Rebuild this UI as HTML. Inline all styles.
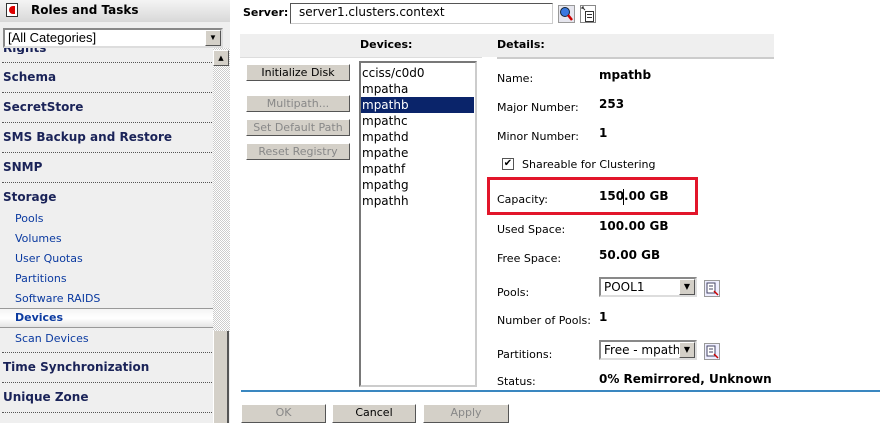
<!DOCTYPE html>
<html><head><style>
*{margin:0;padding:0;box-sizing:border-box}
body{width:880px;height:423px;overflow:hidden;background:#fff;font-family:"DejaVu Sans","Liberation Sans",sans-serif;font-size:12px;position:relative;color:#000}
.a{position:absolute;white-space:nowrap}
.lp{position:absolute;left:0;top:0;width:230px;height:423px;background:#efefef}
.hd{position:absolute;left:0;top:0;width:230px;height:22px;background:linear-gradient(#f4f4f4,#d8d8d8)}
.b{font-weight:bold;color:#1a2358;font-size:12px}
.s{color:#0b3aa0;font-size:11px}
.dot{position:absolute;left:2px;width:210px;border-top:1px dotted #555}
.btn{position:absolute;height:17px;background:#d4d0c8;border:1px solid;border-color:#fff #555 #555 #fff;font-size:11px;text-align:center;line-height:15px}
.dis{color:#888}
.lbl{position:absolute;left:497px;font-size:11px}
.val{position:absolute;left:599px;font-weight:bold;font-size:12px}
.li{position:absolute;left:362px;font-size:12px;line-height:16px}
.sel{position:absolute;height:20px;border:2px inset #ddd;background:#fff;font-size:12px;padding-left:3px;line-height:16px}
.arr{position:absolute;right:0;top:0;width:16px;height:16px;background:#d4d0c8;border:1px solid;border-color:#fff #555 #555 #fff;font-size:8px;text-align:center;line-height:14px}
</style></head><body>
<div class="lp"></div>
<div class="hd"></div>
<div class="a" style="left:6px;top:3px;width:12px;height:14px;border:1px solid #333;background:#fff"><div style="position:absolute;left:2px;top:2px;width:6px;height:8px;background:#d00;border-radius:4px 0 0 4px"></div></div>
<div class="a b" style="left:31px;top:3px;color:#000">Roles and Tasks</div>
<div class="sel" style="left:3px;top:28px;width:220px;font-family:'Liberation Sans',sans-serif;font-size:13px">[All Categories]<div class="arr">▼</div></div>
<div class="a" style="left:213px;top:48px;width:17px;height:285px;background:repeating-conic-gradient(#ccc 0 25%,#fff 0 50%) 0 0/2px 2px"></div>
<div class="a" style="left:213px;top:50px;width:16px;height:16px;background:#d4d0c8;border:1px solid;border-color:#fff #555 #555 #fff;font-size:7px;text-align:center;line-height:14px">▲</div>
<div class="a" style="left:213px;top:331px;width:16px;height:92px;background:#d4d0c8;border-left:1px solid #fff;border-right:2px solid #555"></div>
<div class="a b" style="left:3px;top:48px;height:6px;overflow:hidden;line-height:0">Rights</div>
<div class="dot" style="top:62px"></div>
<div class="a b" style="left:3px;top:70px">Schema</div>
<div class="dot" style="top:92px"></div>
<div class="a b" style="left:3px;top:100px">SecretStore</div>
<div class="dot" style="top:122px"></div>
<div class="a b" style="left:3px;top:130px">SMS Backup and Restore</div>
<div class="dot" style="top:152px"></div>
<div class="a b" style="left:3px;top:160px">SNMP</div>
<div class="dot" style="top:182px"></div>
<div class="a b" style="left:3px;top:190px">Storage</div>
<div class="a s" style="left:15px;top:212px">Pools</div>
<div class="a s" style="left:15px;top:232px">Volumes</div>
<div class="a s" style="left:15px;top:252px">User Quotas</div>
<div class="a s" style="left:15px;top:272px">Partitions</div>
<div class="a s" style="left:15px;top:292px">Software RAIDS</div>
<div class="a" style="left:0;top:308px;width:213px;height:20px;border-top:1px solid #999;border-bottom:1px solid #999;background:linear-gradient(#f4f4f4,#fff 50%,#e4e4e4)"></div>
<div class="a b" style="left:15px;top:311px;color:#0b3aa0;font-size:11px">Devices</div>
<div class="a s" style="left:15px;top:332px">Scan Devices</div>
<div class="dot" style="top:352px"></div>
<div class="a b" style="left:3px;top:360px">Time Synchronization</div>
<div class="dot" style="top:382px"></div>
<div class="a b" style="left:3px;top:390px">Unique Zone</div>
<div class="dot" style="top:412px"></div>

<div class="a" style="left:243px;top:6px;font-weight:bold;font-size:11px">Server:</div>
<div class="a" style="left:290px;top:3px;width:263px;height:21px;border:1px solid;border-color:#555 #ccc #ccc #555;padding-left:8px;font-size:12px;line-height:16px">server1.clusters.context</div>
<svg class="a" style="left:558px;top:5px" width="17" height="18" viewBox="0 0 17 18"><rect x="0.5" y="0.5" width="16" height="17" fill="#e6e6ee" stroke="#999"/><circle cx="7" cy="7" r="4.5" fill="#3a78e0" stroke="#123"/><line x1="10" y1="10" x2="14" y2="15" stroke="#c00" stroke-width="2.5"/></svg>
<svg class="a" style="left:580px;top:5px" width="16" height="18" viewBox="0 0 16 18"><rect x="0.5" y="0.5" width="15" height="17" fill="#fff" stroke="#888"/><rect x="5.5" y="6.5" width="8" height="10" fill="#fff" stroke="#333"/><line x1="7" y1="9.5" x2="12" y2="9.5" stroke="#333"/><line x1="7" y1="12.5" x2="12" y2="12.5" stroke="#333"/><path d="M2 2 L5 5 M2 2 L2 4 M2 2 L4 2" stroke="#333" fill="none"/></svg>

<div class="a" style="left:240px;top:34px;width:534px;height:23px;background:#efefef"></div>
<div class="a" style="left:240px;top:57px;width:242px;border-top:1px solid #ddd"></div>
<div class="a" style="left:497px;top:57px;width:277px;border-top:2px solid #ccc"></div>
<div class="a" style="left:360px;top:38px;font-weight:bold;font-size:11px">Devices:</div>
<div class="a" style="left:497px;top:38px;font-weight:bold;font-size:11px">Details:</div>

<div class="btn" style="left:246px;top:64px;width:104px">Initialize Disk</div>
<div class="btn dis" style="left:246px;top:95px;width:104px">Multipath...</div>
<div class="btn dis" style="left:246px;top:119px;width:104px">Set Default Path</div>
<div class="btn dis" style="left:246px;top:143px;width:104px">Reset Registry</div>

<div class="a" style="left:359px;top:61px;width:118px;height:326px;border:2px inset #ccc;background:#fff"></div>
<div class="a" style="left:361px;top:97px;width:113px;height:16px;background:#0a246a"></div>
<div class="li" style="top:65px">cciss/c0d0</div>
<div class="li" style="top:81px">mpatha</div>
<div class="li" style="top:97px;color:#fff">mpathb</div>
<div class="li" style="top:113px">mpathc</div>
<div class="li" style="top:129px">mpathd</div>
<div class="li" style="top:145px">mpathe</div>
<div class="li" style="top:161px">mpathf</div>
<div class="li" style="top:177px">mpathg</div>
<div class="li" style="top:193px">mpathh</div>

<div class="lbl" style="top:72px">Name:</div><div class="val" style="top:68px">mpathb</div>
<div class="lbl" style="top:101px">Major Number:</div><div class="val" style="top:97px">253</div>
<div class="lbl" style="top:130px">Minor Number:</div><div class="val" style="top:126px">1</div>
<div class="a" style="left:502px;top:158px;width:12px;height:12px;border:1px solid #555;background:#fff;font-size:10px;line-height:10px;text-align:center">✔</div>
<div class="a" style="left:522px;top:158px;font-size:11px">Shareable for Clustering</div>
<div class="a" style="left:487px;top:177px;width:211px;height:38px;border:3px solid #e2162a"></div>
<div class="lbl" style="top:193px">Capacity:</div><div class="val" style="top:189px">150.00 GB</div>
<div class="a" style="left:623px;top:189px;width:1px;height:16px;background:#000"></div>
<div class="lbl" style="top:223px">Used Space:</div><div class="val" style="top:219px">100.00 GB</div>
<div class="lbl" style="top:252px">Free Space:</div><div class="val" style="top:248px">50.00 GB</div>
<div class="lbl" style="top:286px">Pools:</div>
<div class="sel" style="left:599px;top:277px;width:98px">POOL1<div class="arr">▼</div></div>
<svg class="a" style="left:704px;top:280px" width="16" height="17" viewBox="0 0 16 17"><rect x="0.5" y="0.5" width="15" height="16" fill="#eef" stroke="#999"/><rect x="3" y="3" width="8" height="10" fill="#fff" stroke="#446"/><line x1="5" y1="6" x2="9" y2="6" stroke="#446"/><line x1="5" y1="9" x2="9" y2="9" stroke="#446"/><line x1="10" y1="11" x2="14" y2="15" stroke="#c00" stroke-width="1.5"/></svg>
<div class="lbl" style="top:314px">Number of Pools:</div><div class="val" style="top:310px">1</div>
<div class="lbl" style="top:348px">Partitions:</div>
<div class="sel" style="left:599px;top:340px;width:98px;overflow:hidden">Free - mpathb<div class="arr">▼</div></div>
<svg class="a" style="left:704px;top:343px" width="16" height="17" viewBox="0 0 16 17"><rect x="0.5" y="0.5" width="15" height="16" fill="#eef" stroke="#999"/><rect x="3" y="3" width="8" height="10" fill="#fff" stroke="#446"/><line x1="5" y1="6" x2="9" y2="6" stroke="#446"/><line x1="5" y1="9" x2="9" y2="9" stroke="#446"/><line x1="10" y1="11" x2="14" y2="15" stroke="#c00" stroke-width="1.5"/></svg>
<div class="lbl" style="top:375px">Status:</div><div class="val" style="top:372px">0% Remirrored, Unknown</div>

<div class="a" style="left:241px;top:390px;width:639px;height:2px;background:#3a87c0"></div>
<div class="btn dis" style="left:241px;top:404px;width:85px;height:19px">OK</div>
<div class="btn" style="left:332px;top:404px;width:84px;height:19px">Cancel</div>
<div class="btn dis" style="left:423px;top:404px;width:86px;height:19px">Apply</div>
</body></html>
